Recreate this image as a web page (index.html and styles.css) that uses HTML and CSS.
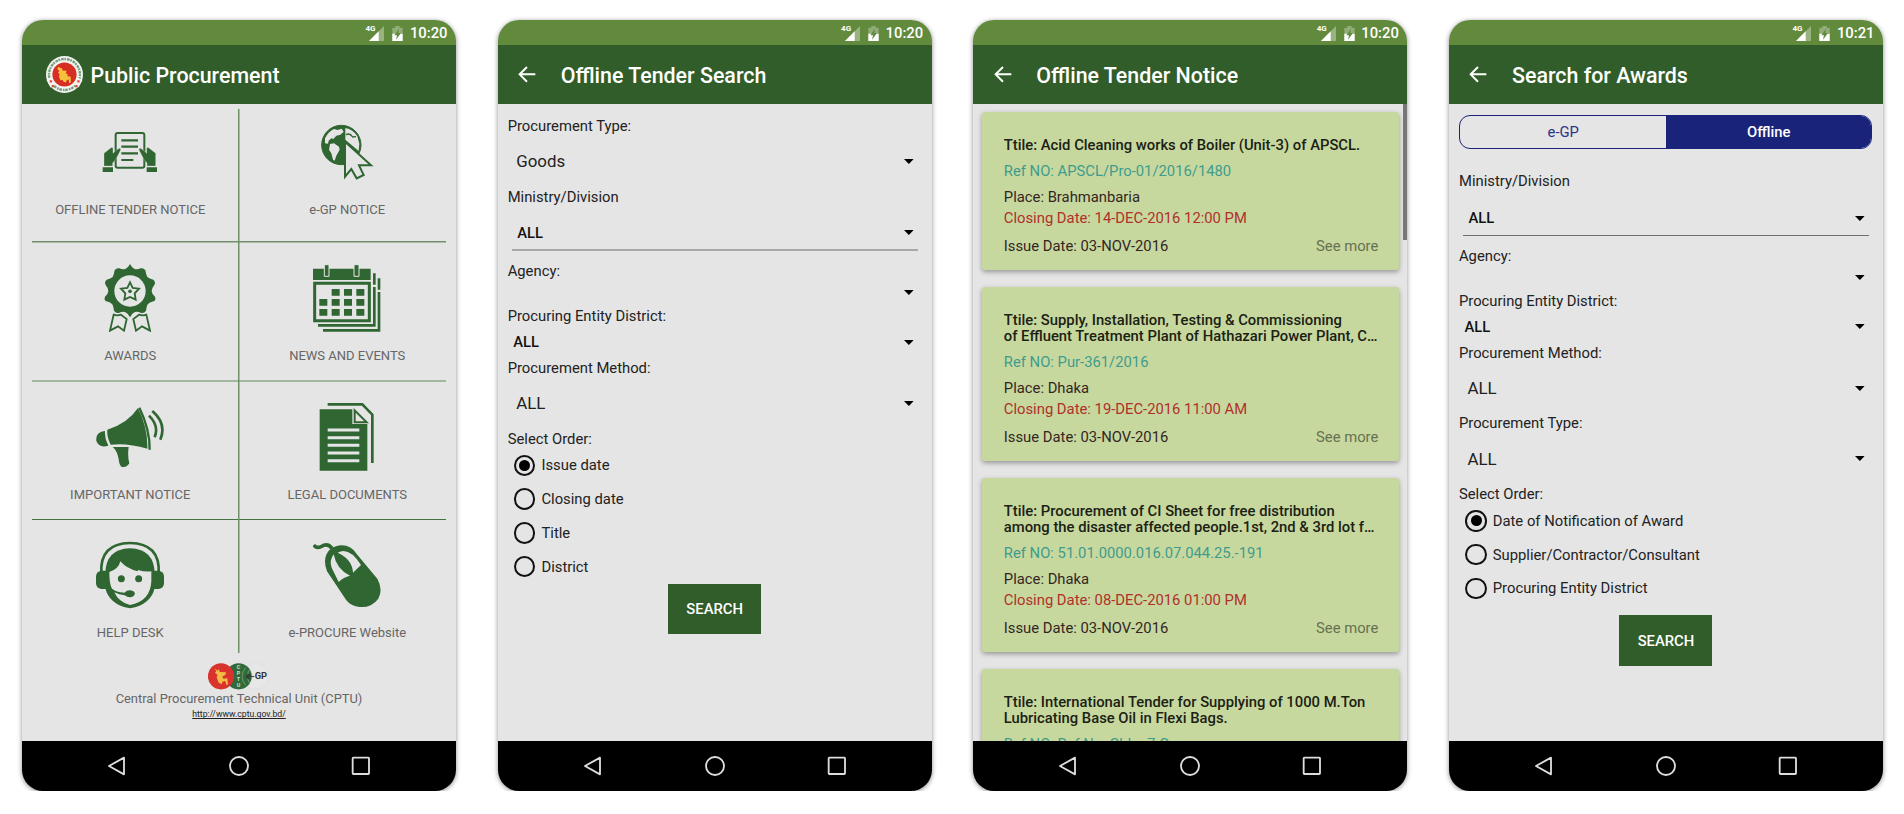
FILE: index.html
```html
<!DOCTYPE html>
<html lang="en">
<head>
<meta charset="utf-8">
<title>Public Procurement</title>
<link rel="stylesheet" href="styles.css">
</head>
<body>
<svg class="defs" aria-hidden="true">
  <symbol id="status" viewBox="0 0 120 50">
    <path d="M57 3v45H12z" fill="#fff" opacity=".35"/>
    <path d="M41 19v29H12z" fill="#fff"/>
    <path d="M82 8h9V3h13v5h9v40H82z" fill="#fff" opacity=".3"/>
    <path d="M82 26h31v22H82z" fill="#fff"/>
    <path d="M102 11 88 31h8l-3 13 15-20h-8z" fill="#618a3d"/>
  </symbol>
  <symbol id="back" viewBox="0 0 54 50"><path d="M52 25H5M27 3 5 25l22 22" fill="none" stroke="#fff" stroke-width="6"/></symbol>
  <symbol id="caret" viewBox="0 0 30 15"><path d="M0 0h30L15 15z"/></symbol>
  <symbol id="nav-back" viewBox="0 0 60 60"><path d="M51 5v50L6 30z" fill="none" stroke="#ddd" stroke-width="5.5" stroke-linejoin="round"/></symbol>
  <symbol id="nav-home" viewBox="0 0 60 60"><circle cx="30" cy="30" r="27" fill="none" stroke="#ddd" stroke-width="5.5"/></symbol>
  <symbol id="nav-recent" viewBox="0 0 60 60"><rect x="5" y="5" width="49" height="49" rx="2" fill="none" stroke="#ddd" stroke-width="5.5"/></symbol>
</svg>

<main class="shots">
  <section class="phone">
    <div class="status"><span class="net">4G</span><svg class="status-icons"><use href="#status"/></svg><span>10:20</span></div>
    <header class="bar home-bar">
      <svg class="seal" viewBox="0 0 110 110">
        <circle cx="55" cy="55" r="55" fill="#f4f4f2"/>
        <circle cx="55" cy="55" r="46" fill="none" stroke="#3f7a45" stroke-width="7" stroke-dasharray="5 3 8 2" pathLength="290" opacity=".7"/>
        <path d="M8 68l12 22M102 68 90 90" stroke="#f4f4f2" stroke-width="15"/>
        <path d="M11 72h7v7h-7zM17 86h7v7h-7zM93 72h7v7h-7zM87 86h7v7h-7z" fill="#e4483e"/>
        <circle cx="55" cy="55" r="36" fill="#d62e23"/>
        <path d="M36 32l7 4 4 0 2 7 12 1-2 8 6 2-2 6 10 1 1 17-5 4-2-13-6 4-1 5-7-1-4-6-6 1-5-12 3-4-5-7 4-5-6-4z" fill="#f5c13d"/>
      </svg>
      <h1>Public Procurement</h1>
    </header>
    <div class="screen">
      <div class="menu">
        <a class="tile r1"><svg class="icon" viewBox="258 326 204 204">
          <rect x="317" y="371" width="86" height="104" rx="6" fill="none" stroke="#2f6631" stroke-width="6"/>
          <path d="M334 393h50M334 412h50M334 432h50M334 452h36" stroke="#2f6631" stroke-width="6.5"/>
          <path d="M282 470V432l21-17q6-2 6 3v14q11-12 19-15 7 0 2 9l-13 25-9 10v9zM437 470V432l-21-17q-6-2-6 3v14q-11-12-19-15-7 0-2 9l13 25 9 10v9z" fill="#2f6631" stroke="#e5e5e5" stroke-width="1"/>
          <path d="M278 474h31v14h-31zM410 474h31v14h-31z" fill="#2f6631"/>
        </svg><span>OFFLINE TENDER NOTICE</span></a>
        <a class="tile r1"><svg class="icon" viewBox="911 326 204 204">
          <circle cx="996" cy="407" r="59" fill="#2f6631" stroke="#2f6631" stroke-width="3"/>
          <path d="M947 387q10-20 27-28l11 3 12-4 6 9-10 9-12 3-9 10-6-2-8 7-2 9-9-1zM962 404l12-2 15 10 2 9-10 18-5 15-5-3-5-19-7-11zM1008 356q23 4 36 25l6 22-2 22-40-34z" fill="#e5e5e5"/>
          <path d="M1010 376q12-6 20 7l10-1" fill="none" stroke="#2f6631" stroke-width="4"/>
          <path d="M1007 397v105l19-23 16 28 21-10-14-29h36z" fill="#e5e5e5" stroke="#2f6631" stroke-width="6"/>
        </svg><span>e-GP NOTICE</span></a>
        <a class="tile r2"><svg class="icon" viewBox="258 71 204 204">
          <path d="M360 71q5 11 14 15 9 2 18-2 9-2 14 6 2 13 6 20 6 5 18 8 8 7 3 16-8 10-8 18 0 8 10 17 4 10-4 14-13 3-18 9-4 8-5 19-6 9-16 6-9-4-17-2-8 3-15 16-7-13-15-16-8-2-17 2-10 3-16-6-1-11-5-19-5-6-18-9-8-4-4-14 10-9 10-17 0-8-8-18-5-9 3-16 12-3 18-8 4-7 6-20 5-8 14-6 9 4 18 2 9-4 14-15z" fill="#2f6631"/>
          <circle cx="360" cy="152" r="47" fill="#e5e5e5"/>
          <path d="M360 126l8 17 19 2-13 14 3 19-17-8-17 8 3-19-13-14 19-2z" fill="none" stroke="#2f6631" stroke-width="5.5"/><circle cx="360" cy="153" r="5.5" fill="#2f6631"/>
          <path d="M311 223q10 4 22 0l17 13-8 35-18-13-24 13zM409 223q-10 4-22 0l-17 13 8 35 18-13 24 13z" fill="#e5e5e5" stroke="#2f6631" stroke-width="5.5"/>
        </svg><span>AWARDS</span></a>
        <a class="tile r2"><svg class="icon" viewBox="911 71 204 204">
          <path d="M911 85h173v34H911z" fill="#2f6631"/>
          <path d="M916 129h164v112H916z" fill="none" stroke="#2f6631" stroke-width="9"/>
          <path d="M945 73h14v35h-14zM1034 73h15v35h-15z" fill="#2f6631" stroke="#e5e5e5" stroke-width="3"/>
          <path d="M967 146h24v20h-24zM1004 146h24v20h-24zM1041 146h24v20h-24zM930 176h24v20h-24zM967 176h24v20h-24zM1004 176h24v20h-24zM1041 176h24v20h-24zM930 206h24v20h-24zM967 206h24v20h-24zM1004 206h24v20h-24zM1041 206h24v20h-24z" fill="#2f6631"/>
          <path d="M1095 99v34M1109 114v34M1095 140v115H926M1109 155v115H941" fill="none" stroke="#2f6631" stroke-width="8"/>
        </svg><span>NEWS AND EVENTS</span></a>
        <a class="tile r3"><svg class="icon" viewBox="258 488 204 204">
          <path d="M292 568q60-18 92-65 30 60 28 122-60-18-110-12-12-24-10-45zM285 572q-2 22 10 44-28 8-36-14-3-28 26-30zM308 620h48q-4 26 2 49-8 14-24 10-6-4-8-22-4-26-18-37z" fill="#2f6631"/>
          <path d="M388 502q32 66 31 126" fill="none" stroke="#2f6631" stroke-width="7"/>
          <path d="M417 526q31 30 17 65M427 512q44 38 24 86" fill="none" stroke="#2f6631" stroke-width="8"/>
        </svg><span>IMPORTANT NOTICE</span></a>
        <a class="tile r3"><svg class="icon" viewBox="911 488 204 204">
          <path d="M931 507h98v44h45v140H931z" fill="#2f6631"/>
          <path d="M1036 510v36h36z" fill="none" stroke="#2f6631" stroke-width="6"/>
          <path d="M955 492h104l30 31v145" fill="none" stroke="#2f6631" stroke-width="8"/>
          <path d="M955 569h95M955 592h95M955 615h95M955 638h95M955 661h95" stroke="#e5e5e5" stroke-width="9"/>
        </svg><span>LEGAL DOCUMENTS</span></a>
        <a class="tile r4"><svg class="icon" viewBox="258 93 204 204">
          <path d="M274 190q-5-90 86-91 91 1 86 91" fill="none" stroke="#2f6631" stroke-width="8"/>
          <path d="M360 115q74 2 74 78v40q-10 50-74 62-64-12-74-62v-40q0-76 74-78z" fill="#2f6631"/>
          <path d="M331 154q19 22 52 30l1-4q20 6 40 4v30q-3 60-64 71-34-8-47-38 15 7 31 9 14 10 27 2 8-9-2-15-14-6-26 5-25-2-37-12-8-12-8-50 28-9 33-32z" fill="#e5e5e5"/>
          <path d="M290 182v55h-16q-16-2-16-18v-19q0-16 16-18zM430 182v55h16q16-2 16-18v-19q0-16-16-18z" fill="#2f6631"/>
          <circle cx="334" cy="206" r="10.5" fill="#2f6631"/><circle cx="386" cy="206" r="10.5" fill="#2f6631"/>
        </svg><span>HELP DESK</span></a>
        <a class="tile r4"><svg class="icon" viewBox="911 93 204 204">
          <path d="M913 105q8 11 22 5 20-13 33 5" fill="none" stroke="#2f6631" stroke-width="11"/>
          <path d="M947 154q2-42 46-48 32-2 49 26l62 74q18 32 3 60-21 28-56 25-27-3-40-20l-58-87q-6-14-6-30z" fill="#2f6631"/>
          <path d="M985 128q34-20 70 37l-24 23q-2-40-46-60zM973 133q-14 19-6 40l21 43q15-15 34-19-40-18-49-64z" fill="#e5e5e5"/>
        </svg><span>e-PROCURE Website</span></a>
      </div>
      <footer class="about">
        <svg class="logo" viewBox="595 459 184 82">
          <circle cx="738" cy="499" r="39" fill="#e7e7e7" stroke="#dcdcdc" stroke-width="2"/>
          <circle cx="687" cy="499" r="39.5" fill="#2f6b3a"/>
          <path d="M720 478a39 39 0 0 0 0 42M708 473a39 39 0 0 0 0 53" fill="none" stroke="#8fb08f" stroke-width="2"/>
          <circle cx="634" cy="499" r="39.5" fill="#d8342d"/>
          <path d="M614 474l10 8 4-5 2 9 19 1-2 8-9 4 3 7 12-1 2 19-5 0-3-11-9 2-1 7-9-3-4-8-3-10 3-6-8-7 4-5z" fill="#f3bd45"/>
          <g class="logo-cptu"><text x="681" y="477">C</text><text x="681" y="495">P</text><text x="681" y="513">T</text><text x="681" y="532">U</text></g>
          <text class="logo-egp" x="709" y="508">e-GP</text>
        </svg>
        <span class="unit">Central Procurement Technical Unit (CPTU)</span>
        <a class="url">http://www.cptu.gov.bd/</a>
      </footer>
    </div>
    <nav class="nav"><svg><use href="#nav-back"/></svg><svg><use href="#nav-home"/></svg><svg><use href="#nav-recent"/></svg></nav>
  </section>

  <section class="phone">
    <div class="status"><span class="net">4G</span><svg class="status-icons"><use href="#status"/></svg><span>10:20</span></div>
    <header class="bar"><svg class="back"><use href="#back"/></svg><h1>Offline Tender Search</h1></header>
    <div class="screen form">
      <label class="first">Procurement Type:</label>
      <div class="spinner">Goods<svg><use href="#caret"/></svg></div>
      <label>Ministry/Division</label>
      <div class="spinner lined thick">ALL<svg><use href="#caret"/></svg></div>
      <label class="agency">Agency:</label>
      <div class="spinner empty"><svg><use href="#caret"/></svg></div>
      <label class="entity">Procuring Entity District:</label>
      <div class="spinner compact">ALL<svg><use href="#caret"/></svg></div>
      <label>Procurement Method:</label>
      <div class="spinner">ALL<svg><use href="#caret"/></svg></div>
      <label>Select Order:</label>
      <div class="radio on"><i></i>Issue date</div>
      <div class="radio"><i></i>Closing date</div>
      <div class="radio"><i></i>Title</div>
      <div class="radio"><i></i>District</div>
      <button class="search">SEARCH</button>
    </div>
    <nav class="nav"><svg><use href="#nav-back"/></svg><svg><use href="#nav-home"/></svg><svg><use href="#nav-recent"/></svg></nav>
  </section>

  <section class="phone">
    <div class="status"><span class="net">4G</span><svg class="status-icons"><use href="#status"/></svg><span>10:20</span></div>
    <header class="bar"><svg class="back"><use href="#back"/></svg><h1>Offline Tender Notice</h1></header>
    <div class="screen list">
      <article class="card">
        <h2>Ttile: Acid Cleaning works of Boiler (Unit-3) of APSCL.</h2>
        <p class="ref">Ref NO: APSCL/Pro-01/2016/1480</p>
        <p class="place">Place: Brahmanbaria</p>
        <p class="closing">Closing Date: 14-DEC-2016 12:00 PM</p>
        <div class="issue"><span>Issue Date: 03-NOV-2016</span><span class="more">See more</span></div>
      </article>
      <article class="card">
        <h2>Ttile: Supply, Installation, Testing &amp; Commissioning<br>of Effluent Treatment Plant of Hathazari Power Plant, C…</h2>
        <p class="ref">Ref NO: Pur-361/2016</p>
        <p class="place">Place: Dhaka</p>
        <p class="closing">Closing Date: 19-DEC-2016 11:00 AM</p>
        <div class="issue"><span>Issue Date: 03-NOV-2016</span><span class="more">See more</span></div>
      </article>
      <article class="card">
        <h2>Ttile: Procurement of CI Sheet for free distribution<br>among the disaster affected people.1st, 2nd &amp; 3rd lot f…</h2>
        <p class="ref">Ref NO: 51.01.0000.016.07.044.25.-191</p>
        <p class="place">Place: Dhaka</p>
        <p class="closing">Closing Date: 08-DEC-2016 01:00 PM</p>
        <div class="issue"><span>Issue Date: 03-NOV-2016</span><span class="more">See more</span></div>
      </article>
      <article class="card">
        <h2>Ttile: International Tender for Supplying of 1000 M.Ton<br>Lubricating Base Oil in Flexi Bags.</h2>
        <p class="ref">Ref NO: Ref No: CbLe 7.C</p>
      </article>
      <div class="scrollbar"></div>
    </div>
    <nav class="nav"><svg><use href="#nav-back"/></svg><svg><use href="#nav-home"/></svg><svg><use href="#nav-recent"/></svg></nav>
  </section>

  <section class="phone">
    <div class="status"><span class="net">4G</span><svg class="status-icons"><use href="#status"/></svg><span>10:21</span></div>
    <header class="bar"><svg class="back"><use href="#back"/></svg><h1>Search for Awards</h1></header>
    <div class="screen form">
      <div class="segmented"><span>e-GP</span><span class="active">Offline</span></div>
      <label>Ministry/Division</label>
      <div class="spinner lined">ALL<svg><use href="#caret"/></svg></div>
      <label class="agency">Agency:</label>
      <div class="spinner empty"><svg><use href="#caret"/></svg></div>
      <label class="entity">Procuring Entity District:</label>
      <div class="spinner compact">ALL<svg><use href="#caret"/></svg></div>
      <label>Procurement Method:</label>
      <div class="spinner">ALL<svg><use href="#caret"/></svg></div>
      <label>Procurement Type:</label>
      <div class="spinner">ALL<svg><use href="#caret"/></svg></div>
      <label>Select Order:</label>
      <div class="radio on"><i></i>Date of Notification of Award</div>
      <div class="radio"><i></i>Supplier/Contractor/Consultant</div>
      <div class="radio"><i></i>Procuring Entity District</div>
      <button class="search spaced">SEARCH</button>
    </div>
    <nav class="nav"><svg><use href="#nav-back"/></svg><svg><use href="#nav-home"/></svg><svg><use href="#nav-recent"/></svg></nav>
  </section>
</main>
</body>
</html>
```
FILE: styles.css
```css
* { box-sizing: border-box; }
body {
  margin: 0;
  background: #fff;
  font-family: Roboto, "Liberation Sans", sans-serif;
  color: #222;
  overflow: hidden;
}
h1, h2, p { margin: 0; font-weight: 500; }
svg { display: block; flex: none; }
.defs { display: none; }

.shots { display: flex; gap: 41.67px; padding: 20px 0 0 22px; }
.phone {
  flex: none;
  display: flex;
  flex-direction: column;
  width: 434px;
  height: 771px;
  border-radius: 21px;
  overflow: hidden;
  background: #e5e5e5;
  box-shadow: 0 1px 5px rgba(0, 0, 0, .45);
}

.status {
  flex: none;
  display: flex;
  justify-content: flex-end;
  height: 25.3px;
  padding-right: 8.5px;
  background: #618a3d;
  color: #fff;
  font-size: 14.8px;
  font-weight: 500;
  line-height: 27.5px;
}
.net { font-size: 8px; font-weight: 700; line-height: 18px; margin-right: -10px; }
.status-icons { width: 40px; height: 16.7px; margin: 5px 4.5px 0 0; }

.bar {
  flex: none;
  display: flex;
  align-items: center;
  height: 58.7px;
  padding: 0 20.5px;
  background: #305d29;
  color: #fff;
}
.bar h1 { font-size: 21.4px; line-height: 28px; padding-top: 3px; }
.back { width: 18px; height: 16.7px; margin-right: 24.5px; }
.home-bar { padding-left: 24px; }
.seal { width: 37px; height: 37px; margin-right: 7.5px; }

.screen { position: relative; flex: 1; min-height: 0; overflow: hidden; }
.nav {
  flex: none;
  display: flex;
  justify-content: center;
  align-items: center;
  gap: 102px;
  height: 50.3px;
  background: #000;
}
.nav svg { width: 20px; height: 20px; }

/* Home menu */
.menu {
  display: grid;
  grid-template-columns: 216.5px 217.5px;
  grid-template-rows: 138px 139px 139px 133px;
  background:
    linear-gradient(#6f9069, #6f9069) 216px 5px / 1.5px 544px no-repeat,
    linear-gradient(#6f9069, #6f9069) 10px 137.5px / 414px 1.5px no-repeat,
    linear-gradient(#a3b7a1, #a3b7a1) 10px 276px / 414px 2px no-repeat,
    linear-gradient(#44723f, #44723f) 10px 415px / 414px 1px no-repeat;
}
.tile { display: flex; flex-direction: column; align-items: center; }
.tile span { font-size: 13px; line-height: 18px; color: #666; margin-top: 15px; }
.icon { width: 68px; height: 68px; }
.r1 { padding-top: 14.5px; }
.r2 { padding-top: 22px; }
.r3 { padding-top: 22px; }
.r4 { padding-top: 21.5px; }
.about { display: flex; flex-direction: column; align-items: center; padding-top: 10px; }
.logo { width: 61.3px; height: 27.3px; }
.logo-cptu { font-size: 16px; font-weight: 700; fill: #cfe0cf; }
.logo-egp { font-size: 28px; font-weight: 700; fill: #333; }
.unit { font-size: 12.9px; line-height: 18px; color: #666; }
.url { font-size: 8.7px; line-height: 12px; color: #222; text-decoration: underline; }

/* Search forms */
.form { display: flex; flex-direction: column; font-size: 14.8px; }
.form label { flex: none; height: 20px; line-height: 20.5px; padding-left: 10px; }
.form .first { margin-top: 12px; }
.form .agency { margin-top: 9.4px; }
.form .entity { margin-top: 1.6px; }
.spinner {
  flex: none;
  display: flex;
  align-items: center;
  justify-content: space-between;
  height: 50.6px;
  padding: 0 18px 0 18.5px;
  font-size: 16.9px;
}
.spinner svg { width: 9.7px; height: 5px; }
.lined, .compact { font-size: 14.8px; font-weight: 500; color: #111; }
.lined { height: 44.7px; margin: 0 14px; padding: 10px 4px 0 5.5px; border-bottom: 1px solid #6e6e6e; }
.thick { border-bottom: 2px solid #a8a8a8; }
.empty { height: 24px; justify-content: flex-end; }
.compact { height: 31.7px; padding-left: 15.5px; }
.radio { flex: none; display: flex; align-items: center; height: 33.75px; padding-left: 16.3px; }
.radio i {
  display: grid;
  place-items: center;
  width: 21.5px;
  height: 21.5px;
  margin-right: 6px;
  border: 2px solid #111;
  border-radius: 50%;
}
.radio.on i::after { content: ""; width: 11px; height: 11px; border-radius: 50%; background: #000; }
.search {
  flex: none;
  align-self: center;
  width: 93px;
  height: 50.6px;
  border: 0;
  padding: 0;
  background: #305d29;
  color: #fff;
  font: 500 14.8px/50px Roboto, sans-serif;
}
.spaced { margin-top: 10px; }
.segmented {
  flex: none;
  display: flex;
  height: 34.3px;
  margin: 11px 10.5px 22.2px;
  border: 1.5px solid #1a237e;
  border-radius: 11px;
  overflow: hidden;
  text-align: center;
  line-height: 33px;
  color: #2d3488;
}
.segmented span { flex: 1; }
.segmented .active { background: #1a237a; color: #fff; font-weight: 500; }

/* Tender list */
.list { display: flex; flex-direction: column; gap: 17px; padding: 8.5px 8.5px 0; font-size: 14.8px; }
.card {
  flex: none;
  padding: 25px 20.5px 14px 22px;
  border-radius: 3px;
  background: #c7d89f;
  box-shadow: 0 2px 5px rgba(0, 0, 0, .35);
  line-height: 20px;
}
.card h2 { font-size: 14.8px; line-height: 16.7px; color: #1b2113; white-space: nowrap; }
.ref { margin-top: 7.2px; color: #3f9c8c; font-weight: 400; }
.place { margin-top: 5.7px; color: #34261f; font-weight: 400; }
.closing { margin-top: .7px; color: #b0302a; font-weight: 400; }
.issue { display: flex; justify-content: space-between; margin-top: 8px; color: #34261f; }
.more { color: #67704f; }
.scrollbar { position: absolute; top: 0; right: 0; width: 4px; height: 136px; background: #777; }
```
